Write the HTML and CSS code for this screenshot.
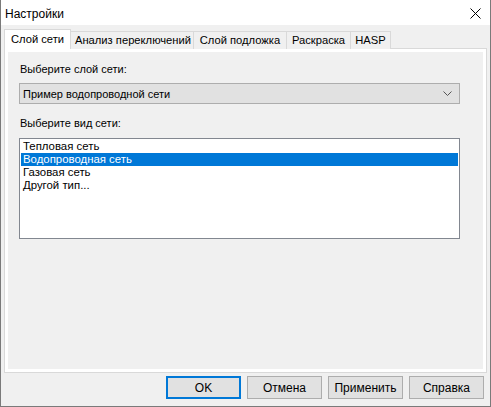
FILE: index.html
```html
<!DOCTYPE html>
<html lang="ru">
<head>
<meta charset="utf-8">
<title>Настройки</title>
<link rel="stylesheet" href="styles.css">
</head>
<body>
<div class="window">
  <div class="titlebar">
    <span class="title">Настройки</span>
    <svg class="close" width="11" height="11" viewBox="0 0 11 11"><path d="M0.5 0.5 L10.5 10.5 M10.5 0.5 L0.5 10.5" stroke="#000" stroke-width="1" fill="none"/></svg>
  </div>
  <div class="content">
    <div class="tabs">
      <div class="tab active t1">Слой сети</div>
      <div class="tab t2">Анализ переключений</div>
      <div class="tab t3">Слой подложка</div>
      <div class="tab t4">Раскраска</div>
      <div class="tab t5">HASP</div>
    </div>
    <div class="panel">
      <div class="page">
        <div class="label">Выберите слой сети:</div>
        <div class="combo">
          <span>Пример водопроводной сети</span>
          <svg class="chev" width="9" height="5" viewBox="0 0 9 5"><path d="M0.5 0.5 L4.5 4.5 L8.5 0.5" stroke="#555" stroke-width="1" fill="none"/></svg>
        </div>
        <div class="label label2">Выберите вид сети:</div>
        <div class="listbox">
          <div class="item">Тепловая сеть</div>
          <div class="item selected">Водопроводная сеть</div>
          <div class="item">Газовая сеть</div>
          <div class="item">Другой тип...</div>
        </div>
      </div>
    </div>
    <div class="buttons">
      <div class="btn default">OK</div>
      <div class="btn">Отмена</div>
      <div class="btn">Применить</div>
      <div class="btn">Справка</div>
    </div>
  </div>
</div>
</body>
</html>
```
FILE: styles.css
```css
* { box-sizing: border-box; }
html, body { margin: 0; padding: 0; background: #f0f0f0; }
body { font-family: "Liberation Sans", Arial, sans-serif; color: #000; }

.window {
  width: 491px;
  height: 407px;
  border: 1px solid #7a7a7a;
  border-top: none;
  background: #f0f0f0;
  display: flex;
  flex-direction: column;
}

.titlebar {
  height: 25px;
  background: #fff;
  display: flex;
  align-items: center;
  justify-content: space-between;
  padding: 0 9px 0 4px;
  font-size: 12px;
}
.title { position: relative; top: 1px; }
.close { display: block; margin-top: 1px; }

.content {
  flex: 1;
  padding: 4px 3px 0 3px;
  display: flex;
  flex-direction: column;
}

.tabs {
  display: flex;
  align-items: flex-end;
  height: 20px;
  position: relative;
  z-index: 1;
  margin-bottom: -1px;
  font-size: 11.2px;
}
.tab {
  height: 18px;
  line-height: 16px;
  text-align: center;
  border: 1px solid #d9d9d9;
  border-bottom: none;
  background: #f0f0f0;
  margin-left: -1px;
  white-space: nowrap;
}
.tab.active {
  height: 20px;
  line-height: 18px;
  background: #fff;
  margin-left: 0;
  position: relative;
  z-index: 2;
}
.t1 { width: 67px; }
.t2 { width: 124px; margin-left: -1px; padding-left: 2px; }
.t3 { width: 94px; }
.t4 { width: 65px; }
.t5 { width: 41px; }

.panel {
  height: 325px;
  border: 1px solid #d9d9d9;
  background: #fff;
  padding: 3px;
  width: 483px;
}
.page {
  height: 100%;
  background: #f0f0f0;
  padding: 11px 0 0 11px;
  font-size: 11px;
}
.label {
  height: 13px;
  line-height: 13px;
  padding-left: 1px;
}
.combo {
  margin-top: 7px;
  width: 441px;
  height: 21px;
  background: #e1e1e1;
  border: 1px solid #adadad;
  display: flex;
  align-items: center;
  justify-content: space-between;
  padding: 0 7px 0 3px;
}
.chev { display: block; }
.label2 { margin-top: 13px; }
.listbox {
  margin-top: 8px;
  width: 441px;
  height: 101px;
  background: #fff;
  border: 1px solid #828790;
  padding: 1px 1px 0 1px;
  font-size: 11.4px;
}
.item {
  height: 13px;
  line-height: 13px;
  padding-left: 2px;
}
.item.selected { background: #0078d7; color: #fff; }

.buttons {
  display: flex;
  justify-content: flex-end;
  gap: 6px;
  margin-top: 3px;
  padding-right: 3px;
}
.btn {
  width: 75px;
  height: 23px;
  background: #e1e1e1;
  border: 1px solid #adadad;
  font-size: 12px;
  display: flex;
  align-items: center;
  justify-content: center;
}
.btn.default { border: 2px solid #0078d7; }
```
